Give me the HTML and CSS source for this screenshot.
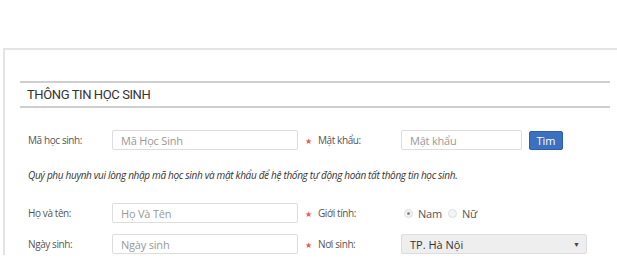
FILE: index.html
```html
<!DOCTYPE html>
<html lang="vi">
<head>
  <meta charset="UTF-8">
  <meta name="viewport" content="width=device-width, initial-scale=1.0">
  <title>Thông tin học sinh</title>
  <link rel="stylesheet" href="styles.css">
</head>
<body>
  <div class="card">
    <div class="section-title">THÔNG TIN HỌC SINH</div>

    <div class="form">
      <div class="row">
        <label class="label">Mã học sinh:</label>
        <input type="text" class="input" placeholder="Mã Học Sinh">
        <span class="star">★</span>
        <label class="label label2">Mật khẩu:</label>
        <input type="password" class="input input-short" placeholder="Mật khẩu">
        <button class="btn">Tìm</button>
      </div>

      <p class="note">Quý phụ huynh vui lòng nhập mã học sinh và mật khẩu để hệ thống tự động hoàn tất thông tin học sinh.</p>

      <div class="row row-gender">
        <label class="label">Họ và tên:</label>
        <input type="text" class="input" placeholder="Họ Và Tên">
        <span class="star">★</span>
        <label class="label label2">Giới tính:</label>
        <div class="radios">
          <span class="radio checked"></span><span class="radio-text">Nam</span>
          <span class="radio"></span><span class="radio-text">Nữ</span>
        </div>
      </div>

      <div class="row">
        <label class="label">Ngày sinh:</label>
        <input type="text" class="input" placeholder="Ngày sinh">
        <span class="star">★</span>
        <label class="label label2">Nơi sinh:</label>
        <div class="select">
          <span>TP. Hà Nội</span>
          <span class="arrow">▼</span>
        </div>
      </div>
    </div>
  </div>
</body>
</html>
```

FILE: styles.css
```css
body {
  margin: 0;
  background: #fff;
  font-family: "Open Sans", sans-serif;
  color: #555;
}
.card {
  box-sizing: border-box;
  margin: 48px 0 0 3px;
  height: 207px;
  border-top: 2px solid #e4e4e4;
  border-left: 2px solid #e4e4e4;
  padding: 31px 0 0 15px;
}
.section-title {
  width: 583px;
  height: 23px;
  line-height: 23px;
  padding-left: 7px;
  border-top: 2px solid #cfcfcf;
  border-bottom: 2px solid #cfcfcf;
  font-family: Roboto, sans-serif;
  font-size: 13px;
  letter-spacing: -0.4px;
  color: #333;
}
.form {
  padding: 22px 0 0 8px;
}
.row {
  display: flex;
  align-items: center;
  height: 20px;
}
.row + .row {
  margin-top: 11px;
}
.label {
  width: 84px;
  font-size: 10px;
  letter-spacing: -0.4px;
  color: #555;
}
.label2 {
  width: 83px;
}
.input {
  box-sizing: border-box;
  width: 186px;
  height: 20px;
  border: 1px solid #ddd;
  border-radius: 2px;
  padding: 0 8px;
  font-family: "Open Sans", sans-serif;
  font-size: 11px;
  letter-spacing: -0.2px;
  color: #333;
}
.input::placeholder {
  color: #999;
}
.input-short {
  width: 121px;
}
.star {
  width: 20px;
  text-align: center;
  color: #e55;
  font-size: 8px;
}
.btn {
  margin-left: 7px;
  width: 34px;
  height: 19px;
  padding: 0;
  border: 1px solid #2f5ea9;
  border-radius: 2px;
  background: #3c70c1;
  color: #fff;
  font-family: "Open Sans", sans-serif;
  font-size: 11px;
}
.note {
  margin: 18px 0 21px;
  font-size: 10px;
  font-style: italic;
  color: #333;
  letter-spacing: -0.32px;
}
.radios {
  display: flex;
  align-items: center;
  padding-left: 3px;
}
.radio {
  box-sizing: border-box;
  width: 9px;
  height: 9px;
  border: 1px solid #ddd;
  border-radius: 50%;
  background: #f4f4f4;
  display: flex;
  justify-content: center;
  align-items: center;
}
.radio.checked::after {
  content: "";
  width: 3px;
  height: 3px;
  border-radius: 50%;
  background: #888;
}
.radio-text {
  font-size: 11px;
  letter-spacing: -0.2px;
  color: #555;
  margin: 0 6px 0 5px;
}
.select {
  box-sizing: border-box;
  width: 186px;
  height: 20px;
  border: 1px solid #ddd;
  border-radius: 2px;
  background: #eee;
  padding: 0 6px 0 8px;
  display: flex;
  justify-content: space-between;
  align-items: center;
  font-size: 11px;
  color: #333;
}
.arrow {
  font-size: 7px;
  color: #444;
}
```
